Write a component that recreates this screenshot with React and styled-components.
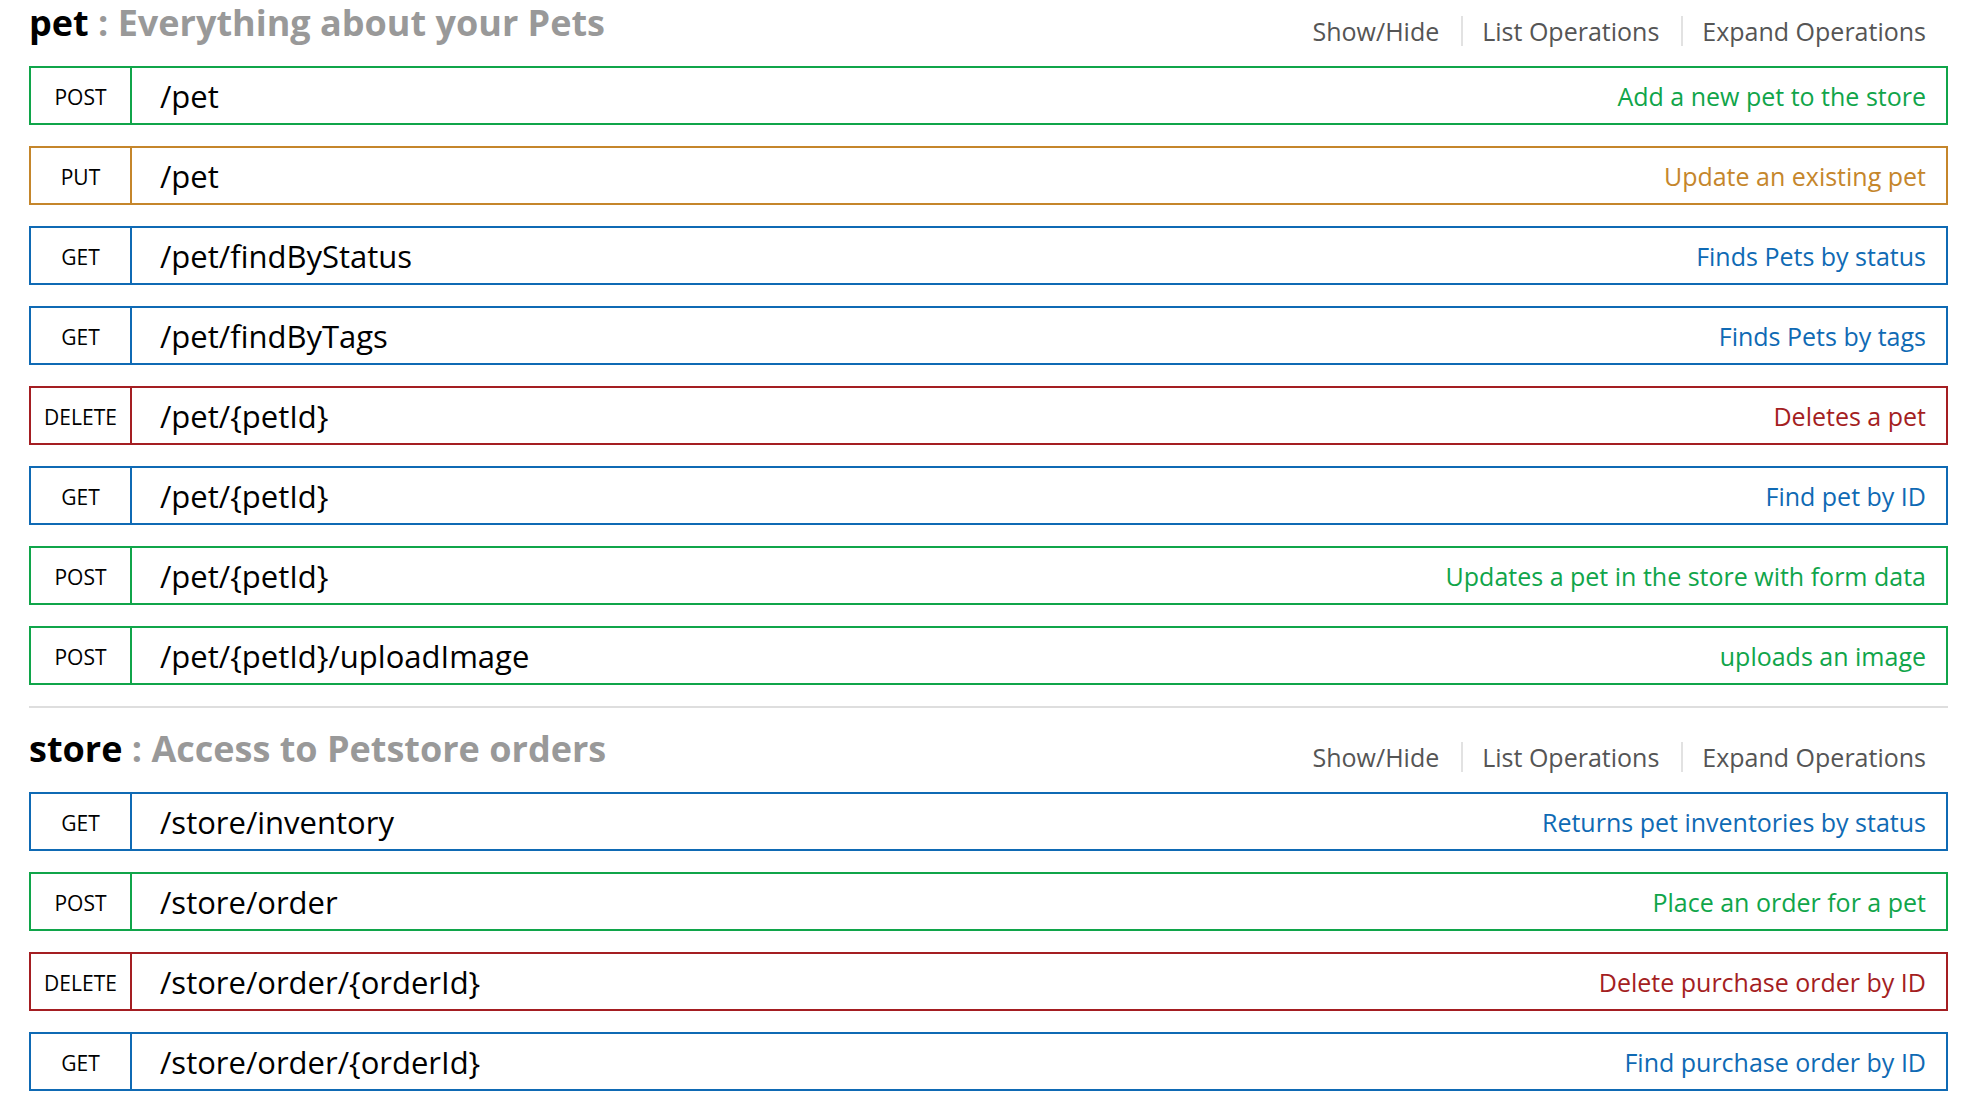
import React from "react";
import styled, { createGlobalStyle } from "styled-components";

const GlobalStyle = createGlobalStyle`
  html, body {
    margin: 0;
    padding: 0;
    background: #fff;
  }
  body {
    font-family: "Open Sans", "Noto Sans", "DejaVu Sans", sans-serif;
    color: #000;
  }
`;

const methodColors = {
  get: "#0f6ab4",
  post: "#10a54a",
  put: "#c5862b",
  delete: "#a41e22",
};

const resources = [
  {
    name: "pet",
    description: "Everything about your Pets",
    operations: [
      { method: "post", path: "/pet", summary: "Add a new pet to the store" },
      { method: "put", path: "/pet", summary: "Update an existing pet" },
      { method: "get", path: "/pet/findByStatus", summary: "Finds Pets by status" },
      { method: "get", path: "/pet/findByTags", summary: "Finds Pets by tags" },
      { method: "delete", path: "/pet/{petId}", summary: "Deletes a pet" },
      { method: "get", path: "/pet/{petId}", summary: "Find pet by ID" },
      { method: "post", path: "/pet/{petId}", summary: "Updates a pet in the store with form data" },
      { method: "post", path: "/pet/{petId}/uploadImage", summary: "uploads an image" },
    ],
  },
  {
    name: "store",
    description: "Access to Petstore orders",
    operations: [
      { method: "get", path: "/store/inventory", summary: "Returns pet inventories by status" },
      { method: "post", path: "/store/order", summary: "Place an order for a pet" },
      { method: "delete", path: "/store/order/{orderId}", summary: "Delete purchase order by ID" },
      { method: "get", path: "/store/order/{orderId}", summary: "Find purchase order by ID" },
    ],
  },
];

const Page = styled.div`
  padding: 0 24px 0 29px;
`;

const Resource = styled.section`
  padding-top: ${(p) => (p.$first ? "0" : "18px")};
  padding-bottom: ${(p) => (p.$last ? "0" : "21px")};
  border-bottom: ${(p) => (p.$last ? "none" : "2px solid #dedede")};
`;

const Heading = styled.div`
  display: flex;
  justify-content: space-between;
  align-items: flex-start;
  height: 44px;
  margin-bottom: 22px;
`;

const Title = styled.h2`
  margin: 0;
  font-size: 36px;
  line-height: 46px;
  font-weight: 700;
  color: #000;
  white-space: nowrap;
`;

const TitleDesc = styled.span`
  color: #999;
`;

const Options = styled.ul`
  display: flex;
  list-style: none;
  margin: 16px 22px 0 0;
  padding: 0;
`;

const Option = styled.li`
  font-size: 25px;
  line-height: 30px;
  color: #555;
  padding: 0 22px 0 19px;
  border-left: 2px solid #e2e2e2;
  &:first-child {
    border-left: none;
  }
  &:last-child {
    padding-right: 0;
  }
`;

const Operations = styled.ul`
  list-style: none;
  margin: 0;
  padding: 0;
  display: flex;
  flex-direction: column;
  gap: 21px;
`;

const Operation = styled.li`
  display: flex;
  align-items: stretch;
  height: 59px;
  box-sizing: border-box;
  border: 2px solid ${(p) => methodColors[p.$method]};
`;

const Method = styled.span`
  flex: 0 0 99px;
  display: flex;
  align-items: center;
  justify-content: center;
  padding-top: 2px;
  border-right: 2px solid ${(p) => methodColors[p.$method]};
  font-size: 21px;
  text-transform: uppercase;
  color: #000;
`;

const Path = styled.span`
  flex: 1;
  display: flex;
  align-items: center;
  padding-left: 28px;
  font-size: 31px;
  color: #000;
`;

const Summary = styled.span`
  display: flex;
  align-items: center;
  padding-right: 20px;
  font-size: 25px;
  color: ${(p) => methodColors[p.$method]};
  white-space: nowrap;
`;

export default function App() {
  return (
    <>
      <GlobalStyle />
      <Page>
        {resources.map((res, i) => (
          <Resource key={res.name} $first={i === 0} $last={i === resources.length - 1}>
            <Heading>
              <Title>
                {res.name} <TitleDesc>: {res.description}</TitleDesc>
              </Title>
              <Options>
                <Option>Show/Hide</Option>
                <Option>List Operations</Option>
                <Option>Expand Operations</Option>
              </Options>
            </Heading>
            <Operations>
              {res.operations.map((op, j) => (
                <Operation key={j} $method={op.method}>
                  <Method $method={op.method}>{op.method}</Method>
                  <Path>{op.path}</Path>
                  <Summary $method={op.method}>{op.summary}</Summary>
                </Operation>
              ))}
            </Operations>
          </Resource>
        ))}
      </Page>
    </>
  );
}
